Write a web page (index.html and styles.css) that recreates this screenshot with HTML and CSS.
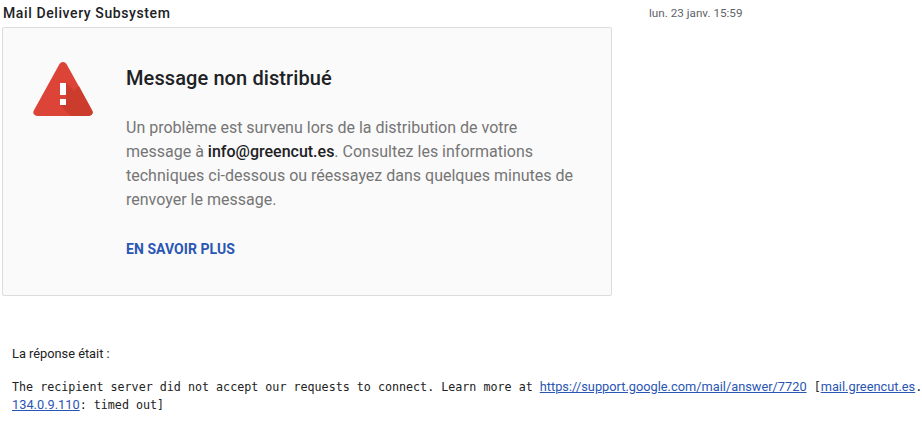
FILE: index.html
```html
<!DOCTYPE html>
<html lang="fr">
<head>
	<title>Message non distribué</title>
	<meta charset="UTF-8">
	<link rel="stylesheet" href="styles.css">
</head>
<body>
	<div class="header">
		<div class="sender">Mail Delivery Subsystem</div>
		<div class="date">lun. 23 janv. 15:59</div>
	</div>
	<div class="card">
		<svg class="warn-icon" width="60" height="54" viewBox="0 0 60 54">
			<path d="M30 0c1.4 0 2.7.8 3.5 2l25.7 46.4c1.500 2.700-.4 5.600-3.400 5.600H4.200C1.200 54-.7 51.100.8 48.400L26.500 2C27.300.8 28.600 0 30 0z" fill="#db4437"/>
			<path d="M33 21v22h-6l11 11h17.800c3 0 4.900-2.900 3.400-5.600L46 24l-5 5-8-8z" fill="#c53929" opacity=".75"/>
			<rect x="27" y="21" width="6" height="12" fill="#fff"/>
			<rect x="27" y="37" width="6" height="6" fill="#fff"/>
		</svg>
		<div class="card-main">
			<h2 class="title">Message non distribué</h2>
			<p class="desc">Un problème est survenu lors de la distribution de votre message à <b>info@greencut.es</b>. Consultez les informations techniques ci-dessous ou réessayez dans quelques minutes de renvoyer le message.</p>
			<a class="more" href="#">EN SAVOIR PLUS</a>
		</div>
	</div>
	<div class="response">
		<p class="label">La réponse était :</p>
		<p class="mono">The recipient server did not accept our requests to connect. Learn more at <a href="#">https://support.google.com/mail/answer/7720</a> [<a href="#">mail.greencut.es</a>.<br><a href="#">134.0.9.110</a>: timed out]</p>
	</div>
</body>
</html>
```

FILE: styles.css
```css
html, body {
	height: 100%;
}
body {
	margin: 0;
	padding: 0 0 0 2px;
	font-family: "Roboto", sans-serif;
	background: #fff;
	color: #202124;
	overflow: hidden;
}
.header {
	display: flex;
	height: 27px;
	padding-left: 1px;
	box-sizing: border-box;
	line-height: 26px;
}
.sender {
	width: 646px;
	font-size: 14px;
	font-weight: 500;
	letter-spacing: .6px;
}
.date {
	font-size: 11.7px;
	color: #5f6368;
}
.card {
	display: flex;
	box-sizing: border-box;
	width: 610px;
	height: 269px;
	padding: 34px 0 0 30px;
	background: #fafafa;
	border: 1px solid #dadce0;
	border-radius: 2px;
}
.warn-icon {
	flex: none;
}
.card-main {
	width: 452px;
	margin-left: 33px;
}
.title {
	margin: 3px 0 0;
	font-size: 20px;
	line-height: 26px;
	font-weight: 500;
	letter-spacing: .1px;
	color: #202124;
}
.desc {
	margin: 25px 0 0;
	font-size: 16px;
	line-height: 24px;
	color: #757575;
}
.desc b {
	font-weight: 500;
	color: #202124;
}
.more {
	display: block;
	margin-top: 27px;
	font-size: 14px;
	line-height: 20px;
	font-weight: 700;
	letter-spacing: .05px;
	color: #2a56b3;
	text-decoration: none;
}
.response {
	padding: 50px 0 0 10px;
	white-space: nowrap;
}
.label {
	margin: 0 0 16px;
	font-size: 12.8px;
	line-height: 16px;
	color: #222;
}
.mono {
	margin: 0;
	font-family: "DejaVu Sans Mono", monospace;
	font-size: 11.7px;
	line-height: 17px;
	color: #222;
}
.mono a {
	font-family: "Roboto", sans-serif;
	font-size: 12.8px;
	color: #2a56b3;
}
```
